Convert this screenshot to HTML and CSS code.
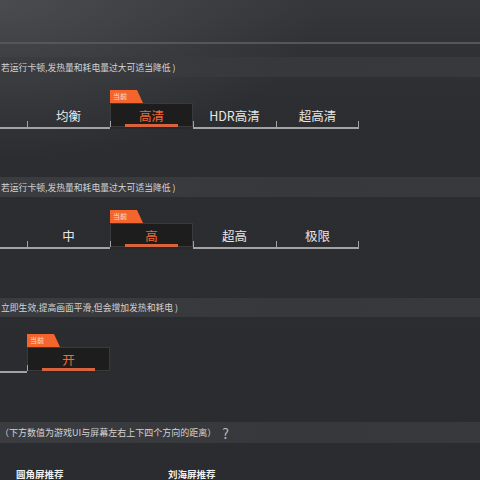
FILE: index.html
```html
<!DOCTYPE html>
<html lang="zh-CN">
<head>
<meta charset="utf-8">
<title>设置</title>
<link rel="stylesheet" href="styles.css">
</head>
<body>
<div class="page">
  <div class="header"></div>
  <div class="divider"></div>

  <div class="strip s1"><span class="strip-text">若运行卡顿,发热量和耗电量过大可适当降低 )</span></div>
  <div class="options">
    <div class="opt"></div>
    <div class="opt"><span>均衡</span></div>
    <div class="opt sel"><span class="tag">当前</span><span>高清</span></div>
    <div class="opt"><span>HDR高清</span></div>
    <div class="opt last"><span>超高清</span></div>
  </div>

  <div class="strip s2"><span class="strip-text">若运行卡顿,发热量和耗电量过大可适当降低 )</span></div>
  <div class="options">
    <div class="opt"></div>
    <div class="opt"><span>中</span></div>
    <div class="opt sel"><span class="tag">当前</span><span>高</span></div>
    <div class="opt"><span>超高</span></div>
    <div class="opt last"><span>极限</span></div>
  </div>

  <div class="strip s3"><span class="strip-text">立即生效,提高画面平滑,但会增加发热和耗电 )</span></div>
  <div class="options o3">
    <div class="opt"></div>
    <div class="opt sel"><span class="tag">当前</span><span>开</span></div>
  </div>

  <div class="strip s4"><span class="strip-text t4">（下方数值为游戏UI与屏幕左右上下四个方向的距离）</span><span class="help">?</span></div>

  <div class="presets">
    <span class="preset">圆角屏推荐</span>
    <span class="preset p2">刘海屏推荐</span>
  </div>
</div>
</body>
</html>
```

FILE: styles.css
```css
html, body {
  margin: 0;
  padding: 0;
}
body {
  width: 480px;
  height: 480px;
  overflow: hidden;
  background:
    radial-gradient(ellipse 320px 160px at 0 0, rgba(90,92,96,0.55), rgba(90,92,96,0) 100%),
    linear-gradient(to bottom, #35373a 0, #303235 42px, #2c2d30 120px, #2b2c2f 480px);
  font-family: "Noto Sans CJK SC", "Noto Sans", sans-serif;
  color: #dcdcdc;
}
.page {
  width: 480px;
  height: 480px;
  overflow: hidden;
}
.header {
  height: 42px;
}
.divider {
  height: 2px;
  background: #545659;
}
.strip {
  display: flex;
  align-items: center;
  height: 20px;
  background: linear-gradient(to right, #3b3c3f, #37383b 60%, #38393c);
  overflow: hidden;
  white-space: nowrap;
}
.strip-text {
  font-size: 8.8px;
  color: #d4d4d4;
  margin-left: 1px;
}
.t4 {
  font-size: 9px;
  margin-left: 0;
  letter-spacing: 0;
}
.help {
  font-size: 14px;
  color: #b9b9b9;
  margin-left: 6px;
}
.s1 { margin-top: 13px; }
.s2 { margin-top: 48px; }
.s3 { margin-top: 49px; height: 19px; }
.s4 { margin-top: 49px; height: 21px; }

.options {
  display: flex;
  margin-left: -56px;
  padding-top: 26px;
}
.o3 { padding-top: 30px; }

.opt {
  position: relative;
  width: 83px;
  height: 24px;
  border-bottom: 2px solid #a3a3a3;
  display: flex;
  align-items: center;
  justify-content: center;
  font-size: 12.5px;
  color: #e6e6e6;
  flex: none;
}
.opt::before {
  content: "";
  position: absolute;
  left: 0;
  bottom: 0;
  width: 1px;
  height: 6px;
  background: #a3a3a3;
}
.opt.last::after {
  content: "";
  position: absolute;
  right: 0;
  bottom: 0;
  width: 1px;
  height: 6px;
  background: #a3a3a3;
}
.opt.sel {
  background: #1e1d1d;
  box-shadow: inset 0 0 0 1px #3a3a3a;
  border-bottom-color: #2a2a2a;
  color: #f26a34;
}
.opt.sel::after {
  content: "";
  position: absolute;
  left: 15px;
  right: 15px;
  bottom: 0;
  height: 3px;
  background: #d8633c;
}
.tag {
  position: absolute;
  left: 0;
  top: -13px;
  width: 33px;
  height: 13px;
  background: #f3652c;
  clip-path: polygon(0 0, 27px 0, 33px 13px, 0 13px);
  font-size: 7px;
  line-height: 13px;
  color: #ffe0d2;
  text-indent: 3px;
  text-align: left;
}

.presets {
  display: flex;
  margin-top: 24px;
  padding-left: 16px;
}
.preset {
  font-size: 9.5px;
  font-weight: bold;
  color: #f0f0f0;
  width: 152px;
  line-height: 14px;
}
```
